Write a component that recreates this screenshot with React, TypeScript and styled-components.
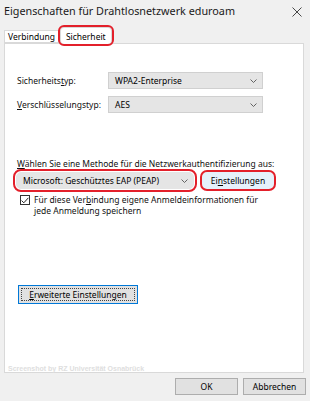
import React from "react";
import styled, { createGlobalStyle } from "styled-components";

const GlobalStyle = createGlobalStyle`
  html, body {
    margin: 0;
    padding: 0;
    background: #f0f0f0;
  }
  body {
    font-family: "Noto Sans", "Open Sans", sans-serif;
    font-size: 8.5px;
    color: #000;
  }
`;

const Window = styled.div`
  width: 310px;
  height: 401px;
  background: #f0f0f0;
  display: flex;
  flex-direction: column;
  overflow: hidden;
`;

const TitleBar = styled.div`
  height: 27px;
  display: flex;
  align-items: flex-start;
  justify-content: space-between;
  padding: 3px 8px 0 4px;
  box-sizing: border-box;
`;

const TitleText = styled.span`
  font-size: 10.8px;
  color: #1a1a1a;
  line-height: 16px;
`;

const CloseIcon = styled.svg`
  width: 10px;
  height: 10px;
  margin-top: 4px;
`;

const Tabs = styled.div`
  display: flex;
  align-items: flex-end;
  padding-left: 4px;
  height: 16px;
  position: relative;
  z-index: 1;
`;

const Tab = styled.div<{ $active?: boolean; $mark?: boolean }>`
  box-sizing: border-box;
  height: ${(p) => (p.$active ? "17px" : "13px")};
  margin-bottom: ${(p) => (p.$active ? "-1px" : "0")};
  padding: ${(p) => (p.$active ? "0 5px" : "0 3px")};
  display: flex;
  align-items: center;
  background: #fff;
  border: 1px solid #d9d9d9;
  border-bottom: ${(p) => (p.$active ? "none" : "1px solid #d9d9d9")};
  ${(p) => (p.$active ? "margin-left: 1px;" : "")}
  font-size: 8.5px;
  ${(p) =>
    p.$mark
      ? "outline: 2px solid #e3202b; border-radius: 4px; outline-offset: 0;"
      : ""}
`;

const Panel = styled.div`
  margin: 0 6px 0 4px;
  height: 330px;
  box-sizing: border-box;
  background: #fff;
  border: 1px solid #d9d9d9;
  padding: 28px 12px 0 12px;
  display: flex;
  flex-direction: column;
`;

const FieldGrid = styled.div`
  display: grid;
  grid-template-columns: 91px 155px;
  row-gap: 7px;
  align-items: center;
`;

const Label = styled.span`
  font-size: 8.5px;
  color: #111;
`;

const Select = styled.div<{ $width?: string; $mark?: boolean }>`
  box-sizing: border-box;
  width: ${(p) => p.$width || "155px"};
  height: 17px;
  background: #e5e5e5;
  border: 1px solid ${(p) => (p.$mark ? "#e5e5e5" : "#d0d0d0")};
  display: flex;
  align-items: center;
  justify-content: space-between;
  padding: 0 5px 0 6px;
  font-size: 8.5px;
  ${(p) =>
    p.$mark ? "outline: 2px solid #e3202b; border-radius: 5px; outline-offset: 1px;" : ""}
`;

const Chevron = styled.svg`
  width: 7px;
  height: 4px;
`;

const MethodLabel = styled(Label)`
  margin-top: 45px;
  display: block;
`;

const MethodRow = styled.div`
  display: flex;
  align-items: center;
  gap: 8px;
  margin-top: 3px;
`;

const MethodSelect = styled(Select)`
  margin-left: -1px;
`;

const Button = styled.div<{ $width: string; $variant?: "hot" | "focus" }>`
  box-sizing: border-box;
  width: ${(p) => p.$width};
  height: ${(p) => (p.$variant === "focus" ? "19px" : "17px")};
  display: flex;
  align-items: center;
  justify-content: center;
  font-size: 8.5px;
  background: ${(p) => (p.$variant === "hot" ? "#e5f1fb" : "#e1e1e1")};
  border: 1px solid
    ${(p) => (p.$variant === "focus" ? "#0078d7" : p.$variant === "hot" ? "#e5f1fb" : "#adadad")};
  ${(p) =>
    p.$variant === "hot"
      ? "outline: 2px solid #e3202b; border-radius: 5px; outline-offset: 0;"
      : ""}
  position: relative;
`;

const FocusRing = styled.div`
  position: absolute;
  inset: 2px;
  border: 1px dotted #444;
`;

const CheckRow = styled.div`
  display: flex;
  align-items: flex-start;
  gap: 4px;
  margin-top: 5px;
  padding-left: 3px;
`;

const CheckBox = styled.div`
  box-sizing: border-box;
  width: 10px;
  height: 10px;
  border: 1px solid #333;
  background: #fff;
  display: flex;
  align-items: center;
  justify-content: center;
  flex-shrink: 0;
  margin-top: 1px;
`;

const CheckText = styled.span`
  font-size: 8.5px;
  line-height: 11px;
  color: #111;
`;

const AdvancedWrap = styled.div`
  margin-top: 69px;
  padding-left: 1px;
`;

const Watermark = styled.div`
  margin-top: auto;
  margin-left: -9px;
  margin-bottom: 0;
  font-size: 7px;
  font-weight: bold;
  color: #dedede;
  font-family: "Liberation Sans", Arial, sans-serif;
`;

const Footer = styled.div`
  display: flex;
  justify-content: flex-end;
  gap: 5px;
  padding: 5px 4px 0 0;
`;

const FooterButton = styled(Button)`
  height: 17px;
`;

const U = styled.span`
  text-decoration: underline;
  text-underline-offset: 1px;
`;

function DropArrow() {
  return (
    <Chevron viewBox="0 0 7 4">
      <path d="M0.5 0.5 L3.5 3.5 L6.5 0.5" fill="none" stroke="#555" strokeWidth="0.9" />
    </Chevron>
  );
}

export default function App() {
  return (
    <>
      <GlobalStyle />
      <Window>
        <TitleBar>
          <TitleText>Eigenschaften für Drahtlosnetzwerk eduroam</TitleText>
          <CloseIcon viewBox="0 0 10 10">
            <path d="M0.5 0.5 L9.5 9.5 M9.5 0.5 L0.5 9.5" stroke="#333" strokeWidth="0.9" />
          </CloseIcon>
        </TitleBar>

        <Tabs>
          <Tab>Verbindung</Tab>
          <Tab $active $mark>
            Sicherheit
          </Tab>
        </Tabs>

        <Panel>
          <FieldGrid>
            <Label>
              Sicherheits<U>t</U>yp:
            </Label>
            <Select>
              <span>WPA2-Enterprise</span>
              <DropArrow />
            </Select>
            <Label>
              <U>V</U>erschlüsselungstyp:
            </Label>
            <Select>
              <span>AES</span>
              <DropArrow />
            </Select>
          </FieldGrid>

          <MethodLabel>
            <U>W</U>ählen Sie eine Methode für die Netzwerkauthentifizierung aus:
          </MethodLabel>
          <MethodRow>
            <MethodSelect $width="178px" $mark>
              <span>Microsoft: Geschütztes EAP (PEAP)</span>
              <DropArrow />
            </MethodSelect>
            <Button $width="72px" $variant="hot">
              Ei<U>n</U>stellungen
            </Button>
          </MethodRow>

          <CheckRow>
            <CheckBox>
              <svg width="8" height="7" viewBox="0 0 8 7">
                <path d="M0.6 3.6 L2.8 5.8 L7.4 0.8" fill="none" stroke="#222" strokeWidth="1" />
              </svg>
            </CheckBox>
            <CheckText>
              Für diese Ver<U>b</U>indung eigene Anmeldeinformationen für
              <br />
              jede Anmeldung speichern
            </CheckText>
          </CheckRow>

          <AdvancedWrap>
            <Button $width="120px" $variant="focus">
              <FocusRing />
              <span>
                <U>E</U>rweiterte Einstellungen
              </span>
            </Button>
          </AdvancedWrap>

          <Watermark>Screenshot by RZ Universität Osnabrück</Watermark>
        </Panel>

        <Footer>
          <FooterButton $width="63px">OK</FooterButton>
          <FooterButton $width="63px">Abbrechen</FooterButton>
        </Footer>
      </Window>
    </>
  );
}
